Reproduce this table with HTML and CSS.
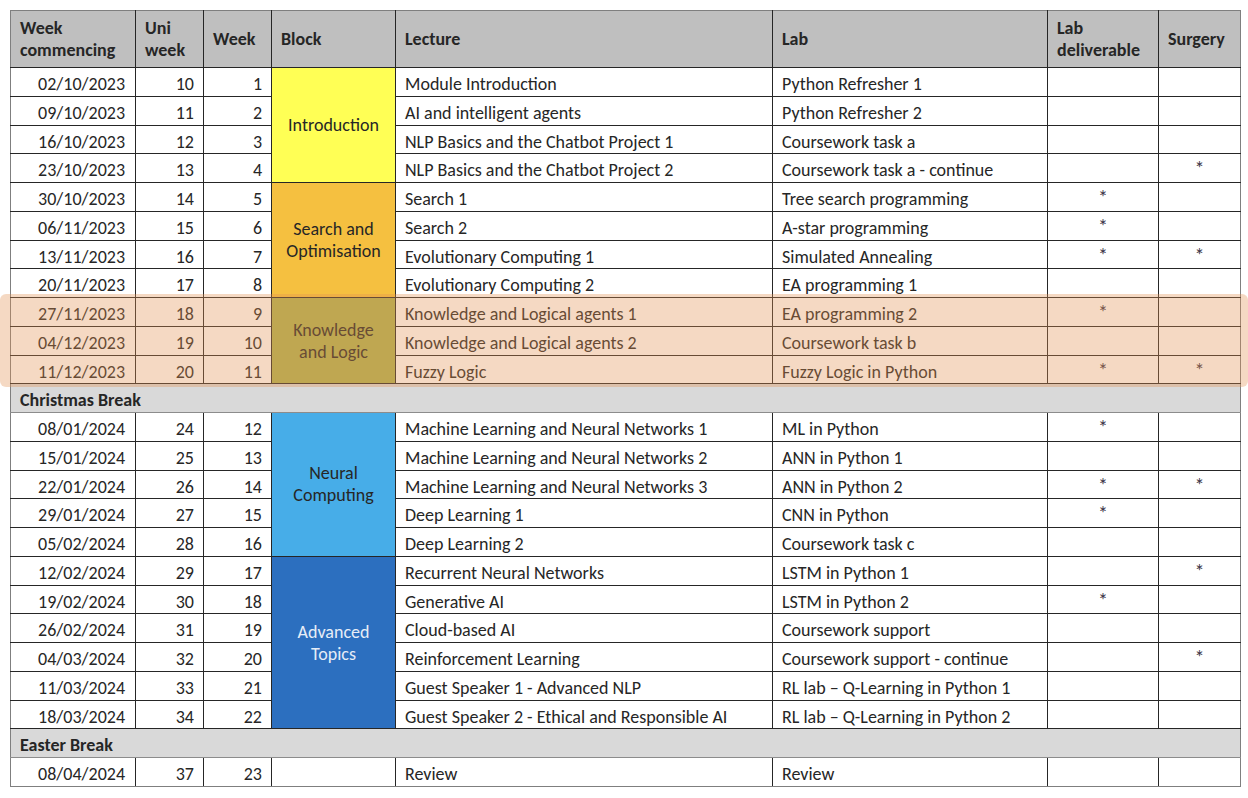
FILE: index.html
```html
<!DOCTYPE html>
<html lang="en">
<head>
<meta charset="utf-8">
<title>Module schedule</title>
<link rel="stylesheet" href="styles.css">
</head>
<body>
<div class="sheet">
<table class="plan">
<colgroup>
<col class="c-date"><col class="c-uni"><col class="c-week"><col class="c-block"><col class="c-lecture"><col class="c-lab"><col class="c-deliv"><col class="c-surg">
</colgroup>
<thead>
<tr>
<th>Week<br>commencing</th><th>Uni<br>week</th><th>Week</th><th>Block</th><th>Lecture</th><th>Lab</th><th>Lab<br>deliverable</th><th>Surgery</th>
</tr>
</thead>
<tbody>
<tr><td class="num">02/10/2023</td><td class="num">10</td><td class="num">1</td><td class="block intro" rowspan="4">Introduction</td><td>Module Introduction</td><td>Python Refresher 1</td><td class="mark"></td><td class="mark"></td></tr>
<tr><td class="num">09/10/2023</td><td class="num">11</td><td class="num">2</td><td>AI and intelligent agents</td><td>Python Refresher 2</td><td class="mark"></td><td class="mark"></td></tr>
<tr><td class="num">16/10/2023</td><td class="num">12</td><td class="num">3</td><td>NLP Basics and the Chatbot Project 1</td><td>Coursework task a</td><td class="mark"></td><td class="mark"></td></tr>
<tr><td class="num">23/10/2023</td><td class="num">13</td><td class="num">4</td><td>NLP Basics and the Chatbot Project 2</td><td>Coursework task a - continue</td><td class="mark"></td><td class="mark">*</td></tr>
<tr><td class="num">30/10/2023</td><td class="num">14</td><td class="num">5</td><td class="block search" rowspan="4">Search and<br>Optimisation</td><td>Search 1</td><td>Tree search programming</td><td class="mark">*</td><td class="mark"></td></tr>
<tr><td class="num">06/11/2023</td><td class="num">15</td><td class="num">6</td><td>Search 2</td><td>A-star programming</td><td class="mark">*</td><td class="mark"></td></tr>
<tr><td class="num">13/11/2023</td><td class="num">16</td><td class="num">7</td><td>Evolutionary Computing 1</td><td>Simulated Annealing</td><td class="mark">*</td><td class="mark">*</td></tr>
<tr><td class="num">20/11/2023</td><td class="num">17</td><td class="num">8</td><td>Evolutionary Computing 2</td><td>EA programming 1</td><td class="mark"></td><td class="mark"></td></tr>
<tr><td class="num">27/11/2023</td><td class="num">18</td><td class="num">9</td><td class="block logic" rowspan="3">Knowledge<br>and Logic</td><td>Knowledge and Logical agents 1</td><td>EA programming 2</td><td class="mark">*</td><td class="mark"></td></tr>
<tr><td class="num">04/12/2023</td><td class="num">19</td><td class="num">10</td><td>Knowledge and Logical agents 2</td><td>Coursework task b</td><td class="mark"></td><td class="mark"></td></tr>
<tr><td class="num">11/12/2023</td><td class="num">20</td><td class="num">11</td><td>Fuzzy Logic</td><td>Fuzzy Logic in Python</td><td class="mark">*</td><td class="mark">*</td></tr>
<tr class="break"><td colspan="8">Christmas Break</td></tr>
<tr><td class="num">08/01/2024</td><td class="num">24</td><td class="num">12</td><td class="block neural" rowspan="5">Neural<br>Computing</td><td>Machine Learning and Neural Networks 1</td><td>ML in Python</td><td class="mark">*</td><td class="mark"></td></tr>
<tr><td class="num">15/01/2024</td><td class="num">25</td><td class="num">13</td><td>Machine Learning and Neural Networks 2</td><td>ANN in Python 1</td><td class="mark"></td><td class="mark"></td></tr>
<tr><td class="num">22/01/2024</td><td class="num">26</td><td class="num">14</td><td>Machine Learning and Neural Networks 3</td><td>ANN in Python 2</td><td class="mark">*</td><td class="mark">*</td></tr>
<tr><td class="num">29/01/2024</td><td class="num">27</td><td class="num">15</td><td>Deep Learning 1</td><td>CNN in Python</td><td class="mark">*</td><td class="mark"></td></tr>
<tr><td class="num">05/02/2024</td><td class="num">28</td><td class="num">16</td><td>Deep Learning 2</td><td>Coursework task c</td><td class="mark"></td><td class="mark"></td></tr>
<tr><td class="num">12/02/2024</td><td class="num">29</td><td class="num">17</td><td class="block advanced" rowspan="6">Advanced<br>Topics</td><td>Recurrent Neural Networks</td><td>LSTM in Python 1</td><td class="mark"></td><td class="mark">*</td></tr>
<tr><td class="num">19/02/2024</td><td class="num">30</td><td class="num">18</td><td>Generative AI</td><td>LSTM in Python 2</td><td class="mark">*</td><td class="mark"></td></tr>
<tr><td class="num">26/02/2024</td><td class="num">31</td><td class="num">19</td><td>Cloud-based AI</td><td>Coursework support</td><td class="mark"></td><td class="mark"></td></tr>
<tr><td class="num">04/03/2024</td><td class="num">32</td><td class="num">20</td><td>Reinforcement Learning</td><td>Coursework support - continue</td><td class="mark"></td><td class="mark">*</td></tr>
<tr><td class="num">11/03/2024</td><td class="num">33</td><td class="num">21</td><td>Guest Speaker 1 - Advanced NLP</td><td>RL lab – Q-Learning in Python 1</td><td class="mark"></td><td class="mark"></td></tr>
<tr><td class="num">18/03/2024</td><td class="num">34</td><td class="num">22</td><td>Guest Speaker 2 - Ethical and Responsible AI</td><td>RL lab – Q-Learning in Python 2</td><td class="mark"></td><td class="mark"></td></tr>
<tr class="break"><td colspan="8">Easter Break</td></tr>
<tr><td class="num">08/04/2024</td><td class="num">37</td><td class="num">23</td><td class="block"></td><td>Review</td><td>Review</td><td class="mark"></td><td class="mark"></td></tr>
</tbody>
</table>
<div class="highlight"></div>
</div>
</body>
</html>
```
FILE: styles.css
```css
html, body {
  margin: 0;
  padding: 0;
  background: #ffffff;
}
body {
  font-family: "Carlito", "Open Sans", "Liberation Sans", sans-serif;
  font-size: 18px;
  color: #262626;
}
.sheet {
  position: relative;
  padding: 10px 0 0 10px;
  width: 1238px;
  height: 788px;
}
.plan {
  border-collapse: collapse;
  table-layout: fixed;
  width: 1230px;
  border: 1px solid #7f7f7f;
}
.c-date { width: 125px; }
.c-uni { width: 68px; }
.c-week { width: 68px; }
.c-block { width: 124px; }
.c-lecture { width: 377px; }
.c-lab { width: 275px; }
.c-deliv { width: 111px; }
.c-surg { width: 82px; }

.plan th {
  height: 56px;
  background: #bfbfbf;
  font-weight: bold;
  text-align: left;
  vertical-align: middle;
  line-height: 22px;
  padding: 0 6px 0 9px;
  border: 1px solid #262626;
  border-top-color: #7f7f7f;
  white-space: nowrap;
}
.plan th:first-child { border-left-color: #7f7f7f; }
.plan th:last-child { border-right-color: #7f7f7f; }

.plan tbody tr { height: 28.76px; }
.plan td {
  border: 1px solid #262626;
  padding: 6px 9px 0 9px;
  line-height: 20px;
  vertical-align: top;
  white-space: nowrap;
  overflow: hidden;
}
.plan td:first-child { border-left-color: #7f7f7f; }
.plan td:last-child { border-right-color: #7f7f7f; }
.plan tbody tr:last-child td { border-bottom-color: #7f7f7f; }

.plan td.num {
  text-align: right;
  padding-right: 9px;
}
.plan td.num:first-child { padding-right: 10px; }

.plan td.mark {
  text-align: center;
  vertical-align: top;
  padding: 4px 0 0 0;
  font-size: 20px;
  line-height: 20px;
  color: #3b3346;
}

.plan td.block {
  text-align: center;
  vertical-align: middle;
  line-height: 22px;
  padding: 0 4px;
}
.block.intro { background: #ffff55; }
.block.search { background: #f5c040; }
.block.logic { background: #adb251; }
.block.neural { background: #47ade8; }
.block.advanced { background: #2c6fbf; color: #e6edf7; }

.plan tr.break td {
  background: #d9d9d9;
  font-weight: bold;
  border-color: #8c8c8c;
  border-left-color: #7f7f7f;
  border-right-color: #7f7f7f;
  padding-left: 9px;
  text-align: left;
}

.highlight {
  position: absolute;
  left: 0;
  top: 294px;
  width: 1248px;
  height: 93px;
  border-radius: 6px;
  background: rgba(226, 146, 84, 0.35);
  pointer-events: none;
}
```
